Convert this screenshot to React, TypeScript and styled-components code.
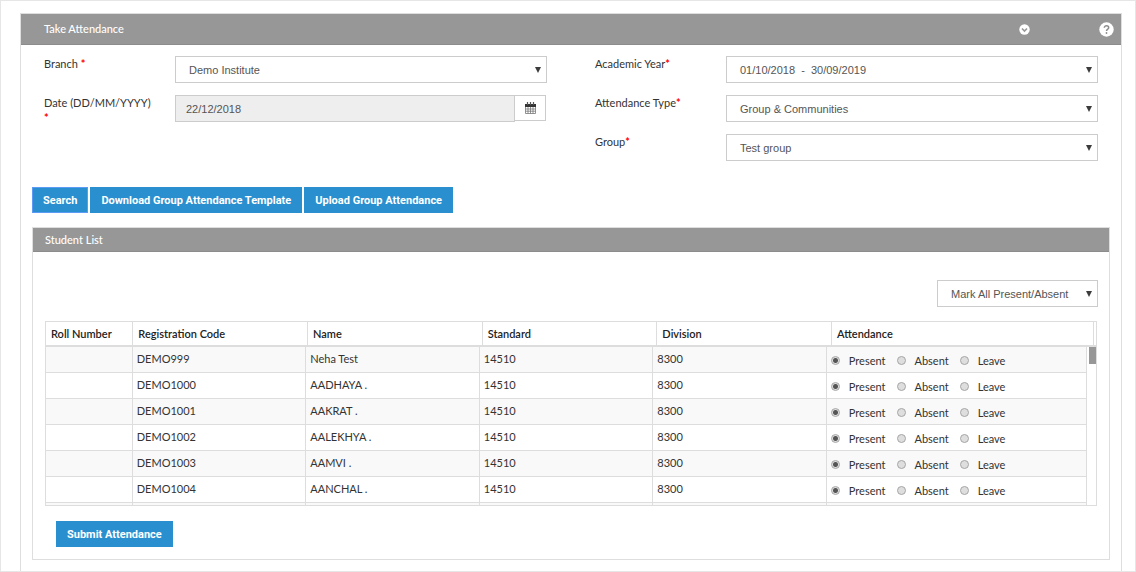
import React from 'react';
import styled, { createGlobalStyle } from 'styled-components';

const GlobalStyle = createGlobalStyle`
  *, *::before, *::after { box-sizing: border-box; }
  body {
    margin: 0;
    background: #fff;
    color: #333;
    font: 11px/16px Lato, "Open Sans", sans-serif;
  }
`;

const Page = styled.main`
  display: flex;
  min-height: 100vh;
  padding: 12px 13px 0 19px;
  border: 1px solid #e6e6e6;
`;

const Panel = styled.section`
  flex: 1;
  min-width: 0;
  border: 1px solid #dedede;
  border-bottom: 0;
`;

const PanelHeader = styled.header`
  display: flex;
  align-items: center;
  height: 31px;
  padding: 0 7px 0 23px;
  background: #979797;
  border-bottom: 1px solid #8c8c8c;
  color: #fff;
`;

const Title = styled.h1`
  flex: 1;
  margin: 0;
  font-size: 11px;
  font-weight: 500;
`;

const IconButton = styled.button<{ $gap?: number }>`
  display: flex;
  margin: 0 ${(p) => p.$gap ?? 0}px 0 0;
  padding: 0;
  border: 0;
  background: none;
  cursor: pointer;
`;

const Form = styled.form`
  display: grid;
  grid-template-columns: 1fr 1fr;
  column-gap: 48px;
  padding: 11px 23px 0;
`;

const Column = styled.div`
  display: flex;
  flex-direction: column;
  gap: 12px;
`;

const Field = styled.div`
  display: grid;
  grid-template-columns: 131px 1fr;
  height: 27px;
`;

const Label = styled.label`
  padding-right: 24px;
  line-height: 15px;
`;

const Required = styled.span`
  color: #f00;
  font-weight: 700;
`;

const SelectBox = styled.div<{ $width?: string }>`
  display: grid;
  grid-template-columns: 1fr 16px;
  align-items: center;
  width: ${(p) => p.$width ?? '100%'};
  height: 27px;
`;

const NativeSelect = styled.select`
  grid-area: 1 / 1 / 2 / 3;
  width: 100%;
  height: 100%;
  padding: 0 20px 0 13px;
  appearance: none;
  background: #fff;
  border: 1px solid #ccc;
  border-radius: 0;
  color: #555;
  font: 11px "Liberation Sans", Arial, sans-serif;
  white-space: pre;
`;

const Arrow = styled.svg`
  grid-area: 1 / 2;
  pointer-events: none;
`;

const DateGroup = styled.div`
  display: flex;
  padding-right: 1px;
`;

const DateInput = styled.input`
  flex: 1;
  min-width: 0;
  height: 27px;
  padding: 0 10px;
  background: #eee;
  border: 1px solid #ccc;
  border-radius: 0;
  color: #555;
  font: 11px "Liberation Sans", Arial, sans-serif;
`;

const CalendarButton = styled.button`
  display: flex;
  align-items: center;
  justify-content: center;
  width: 31px;
  height: 26px;
  padding: 0;
  background: #fff;
  border: 1px solid #ccc;
  border-left: 0;
`;

const Actions = styled.div`
  display: flex;
  gap: 2px;
  padding: 26px 11px 0;
`;

const Button = styled.button<{ $active?: boolean }>`
  height: 26px;
  padding: 0 11px;
  background: #2a8fce;
  border: 0;
  outline: ${(p) => (p.$active ? '1px solid #5b9bf5' : 'none')};
  outline-offset: ${(p) => (p.$active ? '-1px' : '0')};
  color: #fff;
  font: bold 11px Roboto, Arial, sans-serif;
  cursor: pointer;
`;

const ListPanel = styled.section`
  margin: 14px 11px 11px;
  border: 1px solid #dedede;
`;

const ListHeader = styled.h2`
  height: 24px;
  margin: 0;
  padding: 0 12px;
  background: #979797;
  border-bottom: 1px solid #8c8c8c;
  color: #fff;
  font-size: 11px;
  font-weight: 500;
  line-height: 23px;
`;

const ListBody = styled.div`
  padding: 28px 11px 12px 12px;
`;

const BulkRow = styled.div`
  display: flex;
  justify-content: flex-end;
  padding-bottom: 14px;
`;

const TableFrame = styled.div`
  margin-right: 1px;
  border: 1px solid #ddd;
`;

const Table = styled.table`
  width: 100%;
  border-collapse: separate;
  border-spacing: 0;
  table-layout: fixed;
`;

const HeadWrap = styled.div`
  padding-right: 2px;
  border-bottom: 2px solid #ddd;
`;

const HeadCell = styled.th`
  height: 23px;
  padding: 0 4px 0 5px;
  border-right: 1px solid #ddd;
  color: #222;
  font-weight: 600;
  text-align: left;
`;

const BodyWrap = styled.div`
  display: flex;
  height: 158px;
`;

const Scroller = styled.div`
  flex: 1;
  overflow: hidden;
`;

const Track = styled.div`
  width: 9px;
  padding-left: 2px;
`;

const Thumb = styled.div`
  height: 17px;
  background: #979797;
`;

const Row = styled.tr`
  &:nth-child(odd) { background: #f9f9f9; }
`;

const Cell = styled.td`
  height: 26px;
  padding: 0 4px 2px;
  border-right: 1px solid #ddd;
  border-bottom: 1px solid #ddd;
`;

const Choices = styled.div`
  display: flex;
  gap: 11px;
  padding-top: 4px;
`;

const Choice = styled.label`
  display: flex;
  align-items: center;
  gap: 9px;
`;

const Radio = styled.input`
  width: 9px;
  height: 9px;
  margin: 0;
  appearance: none;
  border: 1px solid #a6a6a6;
  border-radius: 50%;
  background: #dedede;

  &:checked {
    background: radial-gradient(circle, #555 0 2px, #dedede 3px);
  }
`;

const SubmitRow = styled.div`
  padding: 15px 11px 0;
`;

function Select({ id, value, label, width }: { id: string; value: string; label?: string; width?: string }) {
  return (
    <SelectBox $width={width}>
      <NativeSelect id={id} aria-label={label}>
        <option>{value}</option>
      </NativeSelect>
      <Arrow width="12" height="8" viewBox="0 0 12 8">
        <path d="M4 1h6L7 7z" fill="#3c3c3c" />
      </Arrow>
    </SelectBox>
  );
}

function Columns() {
  return (
    <colgroup>
      <col style={{ width: '8.33%' }} />
      {[1, 2, 3, 4].map((n) => (
        <col key={n} style={{ width: '16.67%' }} />
      ))}
      <col />
    </colgroup>
  );
}

const headings = ['Roll Number', 'Registration Code', 'Name', 'Standard', 'Division', 'Attendance'];
const students = [
  ['DEMO999', 'Neha Test'],
  ['DEMO1000', 'AADHAYA .'],
  ['DEMO1001', 'AAKRAT .'],
  ['DEMO1002', 'AALEKHYA .'],
  ['DEMO1003', 'AAMVI .'],
  ['DEMO1004', 'AANCHAL .'],
];
const statuses = ['Present', 'Absent', 'Leave'];

export default function App() {
  return (
    <>
      <GlobalStyle />
      <Page>
        <Panel>
          <PanelHeader>
            <Title>Take Attendance</Title>
            <IconButton type="button" aria-label="Collapse" $gap={69}>
              <svg width="11" height="11" viewBox="0 0 11 11">
                <circle cx="5.500" cy="5.500" r="5.200" fill="#fff" />
                <path d="M3 4.500l2.500 2.500L8 4.500" fill="none" stroke="#979797" strokeWidth="1.600" />
              </svg>
            </IconButton>
            <IconButton type="button" aria-label="Help">
              <svg width="15" height="15" viewBox="0 0 15 15">
                <circle cx="7.500" cy="7.500" r="7.200" fill="#fff" />
                <path d="M5.300 5.800C5.300 3 9.700 3.100 9.700 5.700C9.700 7.200 7.500 7.200 7.500 9" fill="none" stroke="#8c8c8c" strokeWidth="1.500" />
                <circle cx="7.500" cy="11" r="0.900" fill="#8c8c8c" />
              </svg>
            </IconButton>
          </PanelHeader>

          <Form>
            <Column>
              <Field>
                <Label htmlFor="branch">Branch <Required>*</Required></Label>
                <Select id="branch" value="Demo Institute" />
              </Field>
              <Field>
                <Label htmlFor="date">Date (DD/MM/YYYY) <Required>*</Required></Label>
                <DateGroup>
                  <DateInput id="date" type="text" readOnly value="22/12/2018" />
                  <CalendarButton type="button" aria-label="Pick a date">
                    <svg width="11" height="12" viewBox="0 0 11 12">
                      <path d="M0 2h11v3H0z" fill="#333" />
                      <path d="M2.500 0v3M5.500 0v3M8.500 0v3" stroke="#555" strokeWidth="1.200" />
                      <path d="M.5 5v6.500h10V5M.5 7h10M.5 9.200h10M3 5v6.500M5.500 5v6.500M8 5v6.500" fill="none" stroke="#777" strokeWidth=".8" />
                    </svg>
                  </CalendarButton>
                </DateGroup>
              </Field>
            </Column>
            <Column>
              <Field>
                <Label htmlFor="year">Academic Year<Required>*</Required></Label>
                <Select id="year" value={'01/10/2018\u00a0 -\u00a0 30/09/2019'} />
              </Field>
              <Field>
                <Label htmlFor="type">Attendance Type<Required>*</Required></Label>
                <Select id="type" value="Group & Communities" />
              </Field>
              <Field>
                <Label htmlFor="group">Group<Required>*</Required></Label>
                <Select id="group" value="Test group" />
              </Field>
            </Column>
          </Form>

          <Actions>
            <Button type="button" $active>Search</Button>
            <Button type="button">Download Group Attendance Template</Button>
            <Button type="button">Upload Group Attendance</Button>
          </Actions>

          <ListPanel>
            <ListHeader>Student List</ListHeader>
            <ListBody>
              <BulkRow>
                <Select id="bulk" label="Mark all" value="Mark All Present/Absent" width="161px" />
              </BulkRow>
              <TableFrame>
                <HeadWrap>
                  <Table>
                    <Columns />
                    <thead>
                      <tr>
                        {headings.map((h) => (
                          <HeadCell key={h} scope="col">{h}</HeadCell>
                        ))}
                      </tr>
                    </thead>
                  </Table>
                </HeadWrap>
                <BodyWrap>
                  <Scroller>
                    <Table>
                      <Columns />
                      <tbody>
                        {students.map(([code, name]) => (
                          <Row key={code}>
                            <Cell />
                            <Cell>{code}</Cell>
                            <Cell>{name}</Cell>
                            <Cell>14510</Cell>
                            <Cell>8300</Cell>
                            <Cell>
                              <Choices>
                                {statuses.map((s) => (
                                  <Choice key={s}>
                                    <Radio type="radio" name={code} defaultChecked={s === 'Present'} />
                                    {s}
                                  </Choice>
                                ))}
                              </Choices>
                            </Cell>
                          </Row>
                        ))}
                        <Row>
                          {headings.map((h) => (
                            <Cell key={h} />
                          ))}
                        </Row>
                      </tbody>
                    </Table>
                  </Scroller>
                  <Track>
                    <Thumb />
                  </Track>
                </BodyWrap>
              </TableFrame>
              <SubmitRow>
                <Button type="button">Submit Attendance</Button>
              </SubmitRow>
            </ListBody>
          </ListPanel>
        </Panel>
      </Page>
    </>
  );
}
